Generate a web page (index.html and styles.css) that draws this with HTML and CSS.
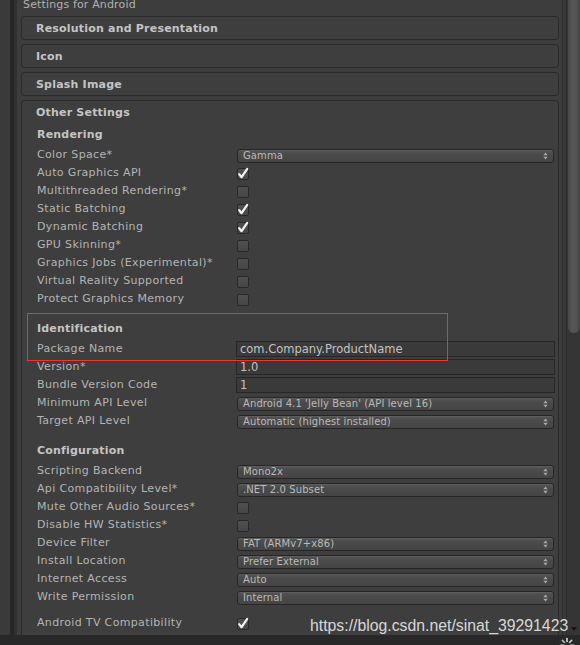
FILE: index.html
```html
<!DOCTYPE html>
<html>
<head>
<meta charset="utf-8">
<link rel="stylesheet" href="styles.css">
</head>
<body>
<div class="window">
  <div class="main">
    <div class="gutter"></div>
    <div class="edge"></div>
    <div class="edge2"></div>
    <div class="inspector">
      <div class="title">Settings for Android</div>
      <div class="foldout"><div class="fold-head">Resolution and Presentation</div></div>
      <div class="foldout"><div class="fold-head">Icon</div></div>
      <div class="foldout"><div class="fold-head">Splash Image</div></div>
      <div class="foldout open">
        <div class="fold-head">Other Settings</div>
        <div class="fold-body">
          <div class="section first">
            <div class="heading">Rendering</div>
            <div class="row"><span class="label">Color Space*</span><div class="select"><span class="val">Gamma</span><svg class="arr" width="5" height="8" viewBox="0 0 5 8"><path d="M0.3 3.3 L2.5 0.4 L4.7 3.3Z M0.3 4.7 L2.5 7.6 L4.7 4.7Z" fill="#a9a9a9"/></svg></div></div>
            <div class="row"><span class="label">Auto Graphics API</span><span class="check on"><svg width="12" height="12" viewBox="0 0 12 12"><path d="M2.2 6.2 L4.6 9.2 L10.2 0.8" fill="none" stroke="#f2f2f2" stroke-width="2.2" stroke-linecap="round" stroke-linejoin="round"/></svg></span></div>
            <div class="row"><span class="label">Multithreaded Rendering*</span><span class="check"></span></div>
            <div class="row"><span class="label">Static Batching</span><span class="check on"><svg width="12" height="12" viewBox="0 0 12 12"><path d="M2.2 6.2 L4.6 9.2 L10.2 0.8" fill="none" stroke="#f2f2f2" stroke-width="2.2" stroke-linecap="round" stroke-linejoin="round"/></svg></span></div>
            <div class="row"><span class="label">Dynamic Batching</span><span class="check on"><svg width="12" height="12" viewBox="0 0 12 12"><path d="M2.2 6.2 L4.6 9.2 L10.2 0.8" fill="none" stroke="#f2f2f2" stroke-width="2.2" stroke-linecap="round" stroke-linejoin="round"/></svg></span></div>
            <div class="row"><span class="label">GPU Skinning*</span><span class="check"></span></div>
            <div class="row"><span class="label">Graphics Jobs (Experimental)*</span><span class="check"></span></div>
            <div class="row"><span class="label">Virtual Reality Supported</span><span class="check"></span></div>
            <div class="row"><span class="label">Protect Graphics Memory</span><span class="check"></span></div>
          </div>
          <div class="section">
            <div class="heading">Identification</div>
            <div class="row"><span class="label">Package Name</span><div class="field">com.Company.ProductName</div></div>
            <div class="row"><span class="label">Version*</span><div class="field">1.0</div></div>
            <div class="row"><span class="label">Bundle Version Code</span><div class="field">1</div></div>
            <div class="row"><span class="label">Minimum API Level</span><div class="select"><span class="val">Android 4.1 'Jelly Bean' (API level 16)</span><svg class="arr" width="5" height="8" viewBox="0 0 5 8"><path d="M0.3 3.3 L2.5 0.4 L4.7 3.3Z M0.3 4.7 L2.5 7.6 L4.7 4.7Z" fill="#a9a9a9"/></svg></div></div>
            <div class="row"><span class="label">Target API Level</span><div class="select"><span class="val">Automatic (highest installed)</span><svg class="arr" width="5" height="8" viewBox="0 0 5 8"><path d="M0.3 3.3 L2.5 0.4 L4.7 3.3Z M0.3 4.7 L2.5 7.6 L4.7 4.7Z" fill="#a9a9a9"/></svg></div></div>
          </div>
          <div class="section">
            <div class="heading">Configuration</div>
            <div class="row"><span class="label">Scripting Backend</span><div class="select"><span class="val">Mono2x</span><svg class="arr" width="5" height="8" viewBox="0 0 5 8"><path d="M0.3 3.3 L2.5 0.4 L4.7 3.3Z M0.3 4.7 L2.5 7.6 L4.7 4.7Z" fill="#a9a9a9"/></svg></div></div>
            <div class="row"><span class="label">Api Compatibility Level*</span><div class="select"><span class="val">.NET 2.0 Subset</span><svg class="arr" width="5" height="8" viewBox="0 0 5 8"><path d="M0.3 3.3 L2.5 0.4 L4.7 3.3Z M0.3 4.7 L2.5 7.6 L4.7 4.7Z" fill="#a9a9a9"/></svg></div></div>
            <div class="row"><span class="label">Mute Other Audio Sources*</span><span class="check"></span></div>
            <div class="row"><span class="label">Disable HW Statistics*</span><span class="check"></span></div>
            <div class="row"><span class="label">Device Filter</span><div class="select"><span class="val">FAT (ARMv7+x86)</span><svg class="arr" width="5" height="8" viewBox="0 0 5 8"><path d="M0.3 3.3 L2.5 0.4 L4.7 3.3Z M0.3 4.7 L2.5 7.6 L4.7 4.7Z" fill="#a9a9a9"/></svg></div></div>
            <div class="row"><span class="label">Install Location</span><div class="select"><span class="val">Prefer External</span><svg class="arr" width="5" height="8" viewBox="0 0 5 8"><path d="M0.3 3.3 L2.5 0.4 L4.7 3.3Z M0.3 4.7 L2.5 7.6 L4.7 4.7Z" fill="#a9a9a9"/></svg></div></div>
            <div class="row"><span class="label">Internet Access</span><div class="select"><span class="val">Auto</span><svg class="arr" width="5" height="8" viewBox="0 0 5 8"><path d="M0.3 3.3 L2.5 0.4 L4.7 3.3Z M0.3 4.7 L2.5 7.6 L4.7 4.7Z" fill="#a9a9a9"/></svg></div></div>
            <div class="row"><span class="label">Write Permission</span><div class="select"><span class="val">Internal</span><svg class="arr" width="5" height="8" viewBox="0 0 5 8"><path d="M0.3 3.3 L2.5 0.4 L4.7 3.3Z M0.3 4.7 L2.5 7.6 L4.7 4.7Z" fill="#a9a9a9"/></svg></div></div>
            <div class="row spaced"><span class="label">Android TV Compatibility</span><span class="check on"><svg width="12" height="12" viewBox="0 0 12 12"><path d="M2.2 6.2 L4.6 9.2 L10.2 0.8" fill="none" stroke="#f2f2f2" stroke-width="2.2" stroke-linecap="round" stroke-linejoin="round"/></svg></span></div>
          </div>
        </div>
        <div class="annot"></div>
      </div>
    </div>
    <div class="sep"></div>
    <div class="scrollbar">
      <div class="thumb"></div>
      <div class="track"><span class="down"></span></div>
    </div>
  </div>
  <div class="statusbar">
    <svg class="spinner" width="16" height="16" viewBox="0 0 16 16">
      <g stroke-width="1.6" stroke-linecap="round">
        <line x1="8" y1="1.5" x2="8" y2="4.5" stroke="#d8d8d8"/>
        <line x1="12.6" y1="3.4" x2="10.5" y2="5.5" stroke="#c8c8c8"/>
        <line x1="14.5" y1="8" x2="11.5" y2="8" stroke="#a0a0a0"/>
        <line x1="12.6" y1="12.6" x2="10.5" y2="10.5" stroke="#808080"/>
        <line x1="8" y1="14.5" x2="8" y2="11.5" stroke="#707070"/>
        <line x1="3.4" y1="12.6" x2="5.5" y2="10.5" stroke="#707070"/>
        <line x1="1.5" y1="8" x2="4.5" y2="8" stroke="#909090"/>
        <line x1="3.4" y1="3.4" x2="5.5" y2="5.5" stroke="#b8b8b8"/>
      </g>
    </svg>
  </div>
  <div class="watermark">https://blog.csdn.net/sinat_39291423</div>
</div>
</body>
</html>
```

FILE: styles.css
```css
* { box-sizing: border-box; }
html, body { margin: 0; padding: 0; }
body {
  width: 580px;
  height: 645px;
  overflow: hidden;
  background: #3a3a3a;
  font-family: "DejaVu Sans", "Liberation Sans", sans-serif;
  font-size: 11px;
  color: #b4b4b4;
}
.window {
  position: relative;
  display: flex;
  flex-direction: column;
  width: 580px;
  height: 645px;
}
.main {
  display: flex;
  height: 635px;
}
.gutter { width: 10px; background: #3a3a3a; }
.edge { width: 4px; background: #262626; }
.edge2 { width: 3px; background: #313131; }
.inspector {
  flex: 1;
  background: #3d3d3d;
  overflow: hidden;
}
.title {
  margin: -2px 0 4px 6px;
  height: 14px;
  line-height: 14px;
  color: #b0b0b0;
  letter-spacing: 0.15px;
  white-space: nowrap;
}
.foldout {
  position: relative;
  margin: 0 3px 4px 4px;
  border: 1px solid #2a2a2a;
  border-radius: 3px;
  background: #3e3e3e;
}
.fold-head {
  height: 22px;
  padding-top: 1px;
  line-height: 21px;
  padding-left: 14px;
  font-weight: bold;
  color: #c4c4c4;
  letter-spacing: 0.2px;
  white-space: nowrap;
}
.fold-body {
  padding: 3px 4px 20px 15px;
}
.section { margin-top: 12px; }
.section.first { margin-top: 0; }
.heading {
  height: 18px;
  line-height: 18px;
  margin-bottom: 2px;
  font-weight: bold;
  color: #c4c4c4;
  letter-spacing: 0.2px;
}
.row {
  display: flex;
  align-items: center;
  height: 18px;
}
.row.spaced { margin-top: 8px; }
.label {
  width: 200px;
  flex: none;
  line-height: 18px;
  letter-spacing: 0.35px;
  white-space: nowrap;
  color: #b4b4b4;
}
.select {
  flex: 1;
  display: flex;
  align-items: center;
  justify-content: space-between;
  height: 14px;
  margin-top: 1px;
  padding: 0 5px 0 5px;
  border: 1px solid #262626;
  border-radius: 3px;
  background: linear-gradient(#545454, #4a4a4a 40%, #454545);
  box-shadow: inset 0 1px 0 rgba(255,255,255,0.06);
  font-size: 10px;
  letter-spacing: 0.1px;
  color: #bababa;
  line-height: 12px;
  white-space: nowrap;
}
.arr { flex: none; margin-right: 0; }
.field {
  flex: 1;
  height: 16px;
  margin-left: -1px;
  margin-right: -1px;
  padding-left: 3px;
  border: 1px solid #262626;
  background: #3a3a3a;
  font-size: 11.5px;
  line-height: 14px;
  color: #c2c2c2;
  white-space: nowrap;
}
.check {
  width: 12px;
  height: 12px;
  margin-top: 2px;
  border: 1px solid #282828;
  border-radius: 2px;
  background: linear-gradient(#505050, #464646);
  position: relative;
}
.check svg {
  position: absolute;
  left: -1px;
  top: -1px;
  overflow: visible;
}
.annot {
  position: absolute;
  z-index: 5;
  left: 5px;
  top: 212px;
  width: 421px;
  height: 48px;
  border: 1px solid #f03434;
}
.sep {
  width: 5px;
  background: #393939;
  border-left: 1px solid #2c2c2c;
  border-right: 1px solid #2a2a2a;
}
.scrollbar {
  width: 13px;
  display: flex;
  flex-direction: column;
  background: #353535;
}
.thumb {
  height: 333px;
  margin-left: 1px;
  border-radius: 0 0 6px 6px;
  background: linear-gradient(90deg, #474747, #575757 40%, #535353 70%, #444444);
}
.track {
  flex: 1;
  position: relative;
}
.down {
  position: absolute;
  left: 4px;
  bottom: 4px;
  width: 0;
  height: 0;
  border-left: 3px solid transparent;
  border-right: 3px solid transparent;
  border-top: 4px solid #161616;
}
.statusbar {
  height: 10px;
  background: #282828;
  position: relative;
  overflow: hidden;
}
.spinner {
  position: absolute;
  left: 559px;
  top: 2px;
}
.watermark {
  position: absolute;
  left: 310px;
  top: 617px;
  font-family: "Liberation Sans", Arial, sans-serif;
  font-size: 15.8px;
  line-height: 18px;
  color: rgba(235,235,235,0.9);
  white-space: nowrap;
}
```
